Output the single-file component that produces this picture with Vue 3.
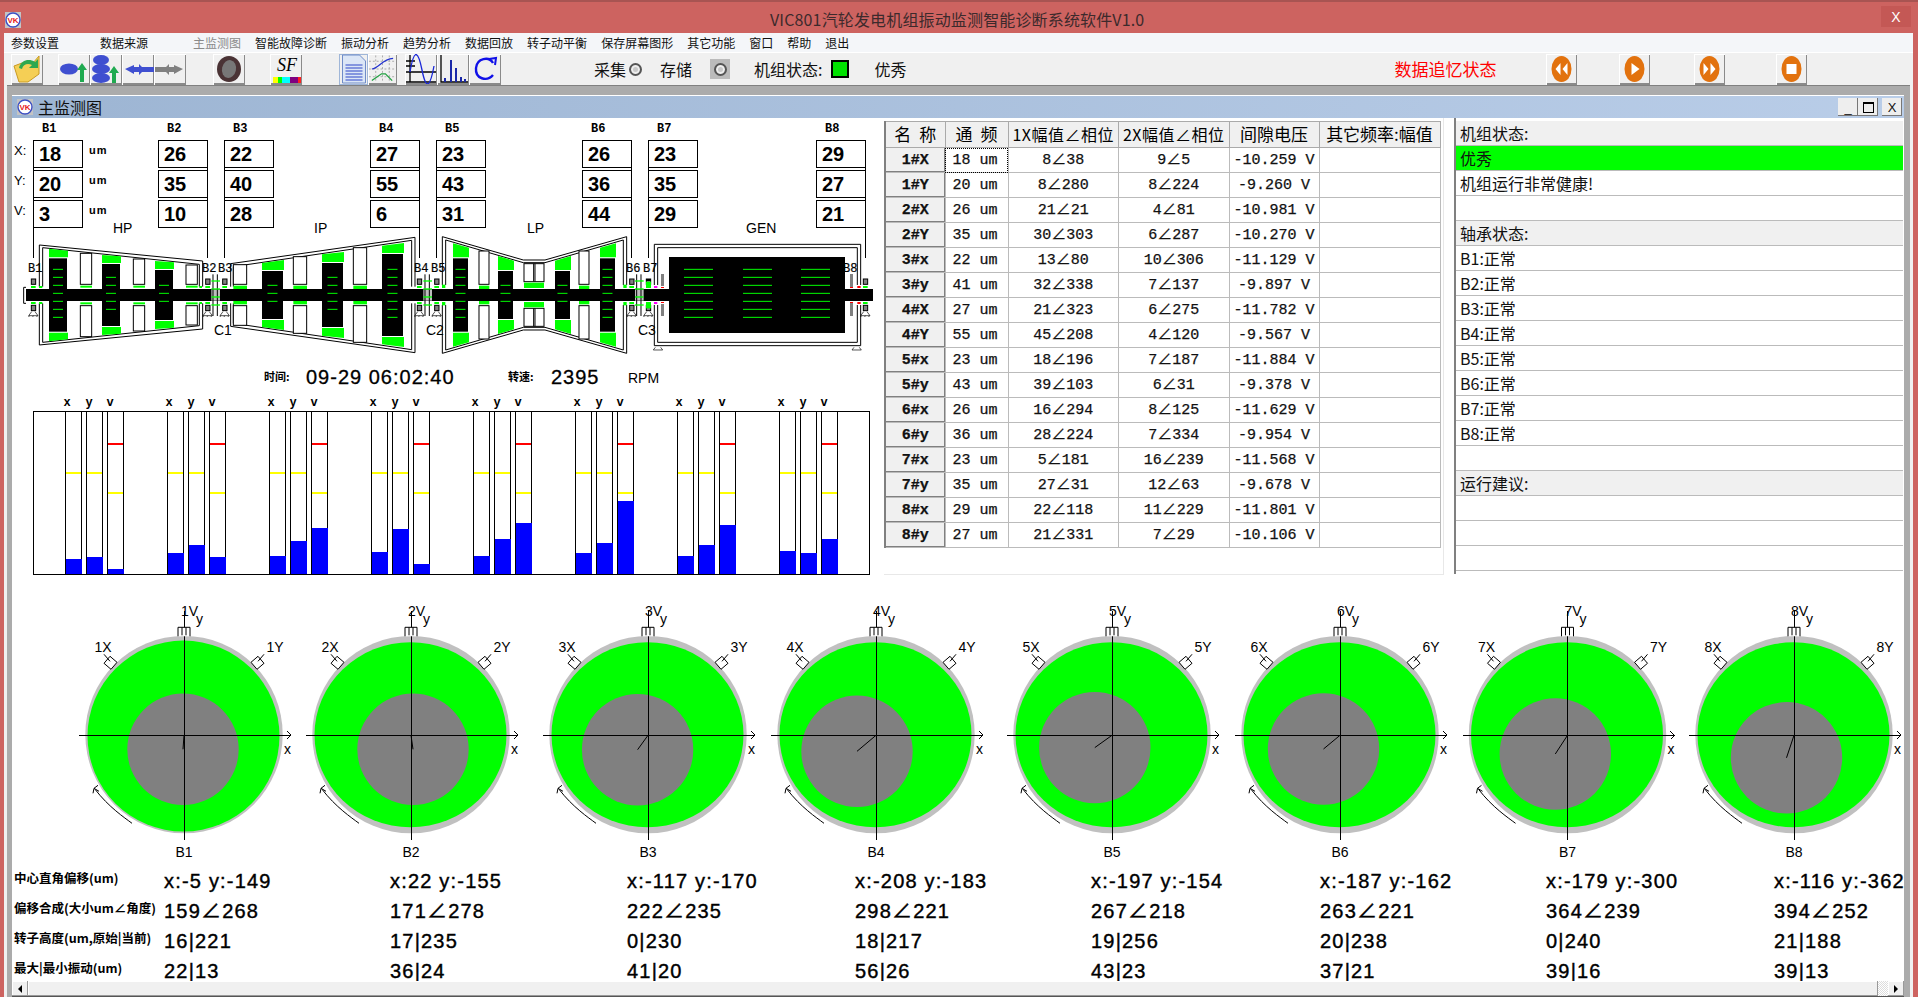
<template>
  <div class="window">
    <div class="titlebar">
      <svg class="logo" viewBox="0 0 16 16"><rect width="16" height="16" fill="#c4c4c4"/><circle cx="8" cy="8" r="7" fill="#fff" stroke="#3b4fc4" stroke-width="1.4"/><text x="8" y="11" text-anchor="middle" class="logo-text">VK</text></svg>
      <span class="title-text">VIC801汽轮发电机组振动监测智能诊断系统软件V1.0</span>
      <span class="close">X</span>
    </div>

    <div class="client">
      <div class="menubar">
        <span v-for="m in menus" :key="m.label" class="menu-item" :class="m.cls">{{ m.label }}</span>
      </div>

      <div class="toolbar">
        <button class="tool first">
          <svg viewBox="0 0 32 30"><path d="M3 12 L11 9 L22 9 L28 2 L28 20 L17 28 L8 28 Z" fill="#f5cf55" stroke="#c99a22"/><path d="M8 14 C10 6 18 4 24 8 L27 5 L27 14 L18 14 L21 11 C17 9 12 10 11 15 Z" fill="#2fa84f"/></svg>
        </button>
        <div class="tool-group g2">
          <button class="tool">
            <svg viewBox="0 0 32 30"><ellipse cx="11" cy="15" rx="9" ry="5.5" fill="#3f4fd0"/><path d="M24 9 L29 16 L26 16 L26 28 L22 28 L22 16 L19 16 Z" fill="#1faa50"/></svg>
          </button>
          <button class="tool">
            <svg viewBox="0 0 32 30"><ellipse cx="11" cy="6" rx="8" ry="5" fill="#3f4fd0"/><ellipse cx="11" cy="15" rx="9" ry="5" fill="#3f4fd0"/><ellipse cx="11" cy="24" rx="9" ry="5" fill="#3f4fd0"/><path d="M24 12 L29 19 L26 19 L26 29 L22 29 L22 19 L19 19 Z" fill="#1faa50"/></svg>
          </button>
          <button class="tool">
            <svg viewBox="0 0 32 30"><path d="M3 15 L12 11 L12 13 L17 13 L17 10 L20 13 L32 13 L32 18 L20 18 L17 21 L17 18 L12 18 L12 20 Z" fill="#3f4fd0"/></svg>
          </button>
          <button class="tool">
            <svg viewBox="0 0 32 30"><path d="M29 15 L20 11 L20 13 L15 13 L15 10 L12 13 L1 13 L1 18 L12 18 L15 21 L15 18 L20 18 L20 20 Z" fill="#808080"/></svg>
          </button>
        </div>
        <button class="tool g3">
          <svg viewBox="0 0 32 30"><ellipse cx="16" cy="15" rx="12" ry="13" fill="#4a3335"/><ellipse cx="16" cy="15" rx="7" ry="9" fill="#777" transform="rotate(12 16 15)"/></svg>
        </button>
        <button class="tool g4">
          <svg viewBox="0 0 32 30"><text x="17" y="17" text-anchor="middle" class="sf">SF</text><rect x="3" y="23" width="5" height="6" fill="#ffff00"/><rect x="8" y="23" width="4" height="6" fill="#00ff00"/><rect x="12" y="23" width="8" height="6" fill="#00ffff"/><rect x="20" y="23" width="8" height="6" fill="#800080"/><rect x="28" y="23" width="3" height="6" fill="#ff2020"/></svg>
        </button>
        <div class="tool-group g5">
          <button class="tool narrow active-tool">
            <svg viewBox="0 0 28 30"><path d="M3 1 H20 L26 7 V29 H3 Z" fill="#dbe6f6" stroke="#6f8cc8"/><path d="M6 11 H23 M6 14 H23 M6 17 H23 M6 20 H23 M6 23 H23 M6 26 H23" stroke="#2f47c8" stroke-width="1.2"/></svg>
          </button>
          <button class="tool narrow">
            <svg viewBox="0 0 30 30"><path d="M1 7 H29 M1 15 H29 M1 23 H29 M8 1 V29 M15 1 V29 M22 1 V29" stroke="#aaa" stroke-dasharray="2 2"/><path d="M4 15 C12 14 14 5 26 4" stroke="#2231d0" fill="none" stroke-width="1.3"/><path d="M4 27 L14 20 L18 20 L25 27" stroke="#20a040" fill="none" stroke-width="1.3"/></svg>
          </button>
        </div>
        <div class="tool-group g6">
          <button class="tool">
            <svg viewBox="0 0 32 30"><path d="M5 1 V28 M1 18 H31 M1 28 H31 M1 7 H10 M1 12 H10" stroke="#000" stroke-width="1.3"/><path d="M5 18 C9 -6 13 -4 17 16 C21 36 25 34 29 12" stroke="#1a28d8" fill="none" stroke-width="1.3"/></svg>
          </button>
          <button class="tool">
            <svg viewBox="0 0 32 30"><path d="M4 1 V28 H31" stroke="#000" stroke-width="1.3" fill="none"/><path d="M8 28 V24 M14 28 V6 M19 28 V14 M24 28 V23 M28 28 V25" stroke="#1a28a8" stroke-width="2"/></svg>
          </button>
          <button class="tool">
            <svg viewBox="0 0 32 30"><path d="M24 9 C20 2 8 4 7 14 C6 25 18 28 24 21" stroke="#1010e8" fill="none" stroke-width="2.4"/><path d="M20 5 L27 4 L26 11" stroke="#1010e8" fill="none" stroke-width="2"/></svg>
          </button>
        </div>

        <span class="tb-label cap">采集</span>
        <span class="ring"></span>
        <span class="tb-label store">存储</span>
        <span class="ring-box"><span class="ring"></span></span>
        <span class="tb-label unit">机组状态:</span>
        <span class="led"></span>
        <span class="tb-label good">优秀</span>
        <span class="tb-label replay">数据追忆状态</span>
        <button class="play prev">
          <svg viewBox="0 0 26 30"><ellipse cx="13" cy="15" rx="10" ry="13" fill="#e2720e"/><path d="M12 9 L7 15 L12 21 Z M19 9 L14 15 L19 21 Z" fill="#fff"/></svg>
        </button>
        <button class="play">
          <svg viewBox="0 0 26 30"><ellipse cx="13" cy="15" rx="10" ry="13" fill="#e2720e"/><path d="M10 9 L18 15 L10 21 Z" fill="#fff"/></svg>
        </button>
        <button class="play next">
          <svg viewBox="0 0 26 30"><ellipse cx="13" cy="15" rx="10" ry="13" fill="#e2720e"/><path d="M7 9 L12 15 L7 21 Z M14 9 L19 15 L14 21 Z" fill="#fff"/></svg>
        </button>
        <button class="play stop">
          <svg viewBox="0 0 26 30"><ellipse cx="13" cy="15" rx="10" ry="13" fill="#e2720e"/><rect x="8" y="10" width="10" height="10" fill="#fff"/></svg>
        </button>
      </div>

      <div class="mdi">
        <div class="child">
          <div class="child-title">
            <svg class="logo" viewBox="0 0 16 16"><rect width="16" height="16" fill="#c4c4c4"/><circle cx="8" cy="8" r="7" fill="#fff" stroke="#3b4fc4" stroke-width="1.4"/><text x="8" y="11" text-anchor="middle" class="logo-text">VK</text></svg>
            <span class="child-name">主监测图</span>
            <span class="win-btn min">_</span>
            <span class="win-btn max"></span>
            <span class="win-btn cls">X</span>
          </div>

          <div class="content">
            <div class="top-row">
              <svg class="plant" width="871" height="457" viewBox="12 118 871 457">
                <!-- value boxes -->
                <g v-for="b in bearings" :key="b.name">
                  <text :x="b.x + 9" y="132" class="b-head">{{ b.name }}</text>
                  <g v-for="(v, i) in b.vals" :key="i">
                    <rect :x="b.x + .5" :y="140.5 + i * 30" width="49" height="27" fill="#fff" stroke="#000" shape-rendering="crispEdges"/>
                    <text :x="b.x + 6" :y="161 + i * 30" class="box-val">{{ v }}</text>
                  </g>
                  <path :d="`M${b.side + .5} 167V170M${b.side + .5} 197V200M${b.side + .5} 228V258`" stroke="#000" shape-rendering="crispEdges"/>
                </g>
                <text x="14" y="155" class="axis-name">X:</text>
                <text x="14" y="185" class="axis-name">Y:</text>
                <text x="14" y="215" class="axis-name">V:</text>
                <text x="89" y="154" class="um">um</text>
                <text x="89" y="184" class="um">um</text>
                <text x="89" y="214" class="um">um</text>
                <text x="113" y="233" class="section">HP</text>
                <text x="314" y="233" class="section">IP</text>
                <text x="527" y="233" class="section">LP</text>
                <text x="746" y="233" class="section">GEN</text>
                <text x="214" y="335" class="section">C1</text>
                <text x="426" y="335" class="section">C2</text>
                <text x="638" y="335" class="section">C3</text>
                <text v-for="l in bearingLabels" :key="l.t" :x="l.x" y="272" class="bearing-name">{{ l.t }}</text>

                <!-- turbine, drawn in 3x units so a 1px line is stroke 3 -->
                <g transform="translate(0 115) scale(.33333)">
                  <path v-for="(c, i) in casings" :key="'c' + i" :d="c" fill="none" stroke="#000" stroke-width="3"/>
                  <g v-for="(f, i) in fins" :key="'f' + i">
                    <rect :x="f.x" :y="f.y" :width="f.w" :height="508 - f.y" fill="#fff" stroke="#000" stroke-width="3"/>
                    <rect :x="f.x" :y="572" :width="f.w" :height="508 - f.y" fill="#fff" stroke="#000" stroke-width="3"/>
                    <rect :x="f.x" :y="512" :width="f.w + 1" :height="f.g" fill="#00ff00"/>
                    <rect :x="f.x" :y="568 - f.g" :width="f.w + 1" :height="f.g" fill="#00ff00"/>
                  </g>
                  <rect x="1572" y="446" width="60" height="54" fill="#fff" stroke="#000" stroke-width="3"/>
                  <rect x="1572" y="580" width="60" height="54" fill="#fff" stroke="#000" stroke-width="3"/>
                  <path d="M1601 446V500M1605 446V500M1601 580V634M1605 580V634" stroke="#000" stroke-width="3"/>
                  <rect x="1572" y="503" width="60" height="16" fill="#00ff00"/>
                  <rect x="1572" y="561" width="60" height="16" fill="#00ff00"/>
                  <g v-for="(d, i) in discs" :key="'d' + i">
                    <polygon :points="`${d.x},${d.l} ${d.x + d.g},${d.r} ${d.x + d.g},${d.y - 3} ${d.x},${d.y - 3}`" fill="#00ff00"/>
                    <polygon :points="`${d.x},${1080 - d.l} ${d.x + d.g},${1080 - d.r} ${d.x + d.g},${1083 - d.y} ${d.x},${1083 - d.y}`" fill="#00ff00"/>
                    <rect :x="d.x" :y="d.y" :width="d.w" :height="1080 - 2 * d.y" fill="#000"/>
                  </g>
                  <rect x="2007" y="426" width="528" height="228" fill="#000"/>
                  <rect x="78" y="522" width="2541" height="36" fill="#000"/>
                  <path d="M78 517H71V565H78" fill="none" stroke="#000" stroke-width="3"/>
                  <path v-for="(m, i) in discMarks" :key="'m' + i" :d="m" stroke="#00ff00" stroke-width="3"/>
                  <g v-for="(c, i) in couplings" :key="'k' + i">
                    <rect :x="c" y="523" width="26" height="34" fill="#bdbdbd"/>
                    <path :d="`M${c + 5} 478V603M${c + 18} 478V603`" stroke="#000" stroke-width="3"/>
                    <rect v-for="y in [496, 520, 544, 568]" :key="y" :x="c" :y="y" width="26" height="4" fill="#00ff00"/>
                  </g>
                  <g v-for="(p, i) in pedestals" :key="'p' + i">
                    <rect :x="p - 6" y="492" width="13" height="16" fill="#808080" stroke="#000" stroke-width="3"/>
                    <rect :x="p - 6" y="571" width="13" height="16" fill="#808080" stroke="#000" stroke-width="3"/>
                    <rect :x="p - 7" y="513" width="14" height="6" fill="#00ff00"/>
                    <rect :x="p - 7" y="561" width="14" height="6" fill="#00ff00"/>
                    <path :d="`M${p - 5} 590L${p - 14} 602H${p + 14}L${p + 5} 590M${p - 12} 602L${p - 14} 606M${p} 602L${p - 2} 606M${p + 12} 602L${p + 10} 606`" fill="#fff" stroke="#000" stroke-width="2"/>
                  </g>
                  <rect v-for="g in greenTabs" :key="g[0] + '-' + g[1]" :x="g[0]" :y="g[1]" :width="g[2]" :height="g[3]" :fill="g[4] || '#00ff00'"/>
                  <path d="M1966 697L1960 705H1988L1982 697M2562 697L2556 705H2584L2578 697" fill="none" stroke="#000" stroke-width="2"/>
                </g>

                <text x="264" y="381" class="tiny-bold">时间:</text>
                <text x="306" y="384" class="big-time">09-29 06:02:40</text>
                <text x="508" y="381" class="tiny-bold">转速:</text>
                <text x="551" y="384" class="big-time">2395</text>
                <text x="628" y="383" class="rpm">RPM</text>

                <!-- vibration bars -->
                <rect x="33.5" y="411.5" width="836" height="163" fill="#fff" stroke="#000" shape-rendering="crispEdges"/>
                <g v-for="(g, i) in barGroups" :key="'bar' + i" :transform="`translate(${i * 102} 0)`" shape-rendering="crispEdges">
                  <text x="67" y="406" text-anchor="middle" class="bar-axis">x</text>
                  <text x="89" y="406" text-anchor="middle" class="bar-axis">y</text>
                  <text x="110" y="406" text-anchor="middle" class="bar-axis">v</text>
                  <g v-for="(h, j) in g" :key="j">
                    <rect :x="65.5 + j * 21" y="411.5" width="16" height="163" fill="#fff" stroke="#000"/>
                    <rect :x="66 + j * 21" :y="574 - h" width="16" :height="h" fill="#0000ff"/>
                  </g>
                  <rect x="66" y="472" width="15" height="2" fill="#ffff00"/>
                  <rect x="87" y="472" width="15" height="2" fill="#ffff00"/>
                  <rect x="108" y="443" width="15" height="2" fill="#ff0000"/>
                  <rect x="108" y="492" width="15" height="2" fill="#ffff00"/>
                </g>
              </svg>

              <div class="table-wrap">
                <table class="grid">
                  <colgroup>
                    <col class="c1"><col class="c2"><col class="c3"><col class="c3"><col class="c4"><col class="c5">
                  </colgroup>
                  <thead>
                    <tr>
                      <th class="spaced">名 称</th><th class="spaced">通 频</th><th class="amp">1X幅值∠相位</th><th class="amp">2X幅值∠相位</th><th>间隙电压</th><th>其它频率:幅值</th>
                    </tr>
                  </thead>
                  <tbody>
                    <tr v-for="(r, i) in rows" :key="r[0]">
                      <td class="name"><span>{{ r[0] }}</span></td>
                      <td class="freq" :class="{ focus: i === 0 }">{{ r[1] }} um</td>
                      <td>{{ r[2] }}</td>
                      <td>{{ r[3] }}</td>
                      <td>{{ r[4] }} V</td>
                      <td></td>
                    </tr>
                  </tbody>
                </table>
              </div>

              <div class="status">
                <div v-for="(s, i) in statusRows" :key="i" class="status-row" :class="s.cls">{{ s.text }}</div>
              </div>
            </div>

            <svg class="gauges" width="1891" height="287" viewBox="12 575 1891 287">
              <g v-for="g in gauges" :key="g.n" :transform="`translate(${g.cx} 735.3)`">
                <circle cy="-.7" r="98.7" fill="#c0c0c0"/>
                <ellipse cx="-.5" :cy="g.gy" rx="96" :ry="g.gry" fill="#00ff00"/>
                <circle :cx="g.dx" :cy="g.dy" r="55.7" fill="#808080"/>
                <path d="M-105 0H107M103-4L107 0L103 4M0-124V105" fill="none" stroke="#000" stroke-width="1" shape-rendering="crispEdges"/>
                <line x1="0" y1="0" :x2="g.dx" :y2="g.dy" stroke="#000"/>
                <path d="M-6-99V-108H6V-99M-2-108V-100M2-108V-100" fill="#fff" stroke="#000"/>
                <path d="M-80-81L-74-74M-80-72L-74-79L-67-73L-73-66Z" fill="#fff" stroke="#000"/>
                <path d="M80-81L74-74M80-72L74-79L67-73L73-66Z" fill="#fff" stroke="#000"/>
                <path d="M-90 53L-86 50M-91 58L-90 53L-85 56M-89 54C-75 72-60 82-52 88" fill="none" stroke="#000"/>
                <text x="5.5" y="-119" text-anchor="middle" class="g-label">{{ g.n }}V</text>
                <text x="12" y="-111" class="g-label">y</text>
                <text x="100" y="19" class="g-label">x</text>
                <text y="122" text-anchor="middle" class="g-label">B{{ g.n }}</text>
                <text x="-81" y="-83" text-anchor="middle" class="g-label">{{ g.n }}X</text>
                <text x="91" y="-83" text-anchor="middle" class="g-label">{{ g.n }}Y</text>
              </g>
            </svg>

            <div class="stats">
              <template v-for="row in stats" :key="row.label">
                <div class="stat-label">{{ row.label }}</div>
                <div v-for="(v, i) in row.vals" :key="i" class="stat-val">{{ v }}</div>
              </template>
            </div>
          </div>

          <div class="hscroll">
            <span class="arrow"><i class="tri left"></i></span>
            <span class="thumb"></span>
            <span class="track"></span>
            <span class="arrow"><i class="tri right"></i></span>
          </div>
        </div>
      </div>
    </div>
  </div>
</template>

<script setup>
const menus = [
  { label: '参数设置' },
  { label: '数据来源', cls: 'gap-a' },
  { label: '主监测图', cls: 'gap-b disabled' },
  { label: '智能故障诊断' },
  { label: '振动分析' },
  { label: '趋势分析' },
  { label: '数据回放' },
  { label: '转子动平衡' },
  { label: '保存屏幕图形' },
  { label: '其它功能' },
  { label: '窗口' },
  { label: '帮助' },
  { label: '退出' }
]

const bearings = [
  { name: 'B1', x: 33, side: 33, vals: [18, 20, 3] },
  { name: 'B2', x: 158, side: 207, vals: [26, 35, 10] },
  { name: 'B3', x: 224, side: 224, vals: [22, 40, 28] },
  { name: 'B4', x: 370, side: 419, vals: [27, 55, 6] },
  { name: 'B5', x: 436, side: 436, vals: [23, 43, 31] },
  { name: 'B6', x: 582, side: 631, vals: [26, 36, 44] },
  { name: 'B7', x: 648, side: 648, vals: [23, 35, 29] },
  { name: 'B8', x: 816, side: 865, vals: [29, 27, 21] }
]

const bearingLabels = [
  { t: 'B1', x: 28 }, { t: 'B2', x: 202 }, { t: 'B3', x: 218 }, { t: 'B4', x: 414 },
  { t: 'B5', x: 431 }, { t: 'B6', x: 626 }, { t: 'B7', x: 643 }, { t: 'B8', x: 843 }
]

// upper half of a casing, the lower half is the same thing mirrored round y=540
const mirror = pts => pts.map(([x, y]) => [x, 1080 - y])
const line = pts => 'M' + pts.map(p => p.join(' ')).join('L')
const both = pts => [line(pts), line(mirror(pts))]

const casings = [
  ...both([[118, 515], [118, 390], [608, 438], [608, 515]]),
  ...both([[128, 515], [128, 398], [598, 448], [598, 515]]),
  ...both([[692, 515], [692, 446], [1245, 367], [1245, 515]]),
  ...both([[700, 515], [700, 455], [1235, 376], [1235, 515]]),
  ...both([[1327, 510], [1327, 365], [1570, 435], [1635, 435], [1880, 365], [1880, 510]]),
  ...both([[1337, 510], [1337, 375], [1570, 443], [1635, 443], [1870, 375], [1870, 510]]),
  ...both([[1963, 510], [1963, 388], [2582, 388], [2582, 510]]),
  ...both([[1973, 510], [1973, 398], [2572, 398], [2572, 510]])
]

const fins = [
  { x: 241, y: 415, w: 34, g: 6 }, { x: 400, y: 432, w: 34, g: 6 }, { x: 558, y: 450, w: 34, g: 6 },
  { x: 700, y: 449, w: 40, g: 12 }, { x: 880, y: 425, w: 40, g: 12 }, { x: 1060, y: 398, w: 40, g: 12 },
  { x: 1437, y: 408, w: 30, g: 16 }, { x: 1737, y: 408, w: 30, g: 16 }
]

const discs = [
  { x: 147, w: 54, g: 57, y: 430, l: 401, r: 407 },
  { x: 306, w: 54, g: 57, y: 447, l: 420, r: 424 },
  { x: 465, w: 54, g: 57, y: 465, l: 438, r: 442 },
  { x: 786, w: 63, g: 66, y: 468, l: 444, r: 435 },
  { x: 966, w: 63, g: 66, y: 444, l: 418, r: 411 },
  { x: 1146, w: 63, g: 66, y: 417, l: 392, r: 384 },
  { x: 1359, w: 45, g: 48, y: 430, l: 385, r: 398 },
  { x: 1494, w: 45, g: 48, y: 468, l: 423, r: 437 },
  { x: 1665, w: 45, g: 48, y: 468, l: 437, r: 423 },
  { x: 1800, w: 45, g: 48, y: 430, l: 398, r: 385 }
]

const discMarks = []
for (const d of discs) {
  const mid = d.x + d.w / 2
  for (let k = -3; k <= 3; k++) {
    const y = 535 + k * 24
    if (y >= d.y + 30 && y <= 1080 - d.y - 40) discMarks.push(`M${mid - 15} ${y}H${mid + 15}`)
  }
}
for (const x of [2052, 2229, 2403]) {
  for (let k = -3; k <= 3; k++) discMarks.push(`M${x} ${535 + k * 24}h87`)
}

const couplings = [634, 1270, 1905]
const pedestals = [100, 623, 674, 1258, 1310, 1895, 1945, 2596]
const greenTabs = [
  [117, 513, 10, 6], [117, 561, 10, 6], [598, 513, 8, 6], [598, 561, 8, 6],
  [1326, 509, 10, 10], [1326, 561, 10, 10], [1870, 509, 10, 10], [1870, 561, 10, 10],
  [1938, 500, 15, 19], [1938, 561, 15, 19],
  [1938, 492, 15, 6, '#000000'],
  [1962, 513, 10, 6, '#ff00ff'], [1962, 561, 10, 6, '#ff00ff'],
  [1983, 477, 9, 36, '#808080'], [1983, 567, 9, 36, '#808080'],
  [1983, 516, 9, 3, '#ff0000'], [1983, 561, 9, 3, '#ff0000'],
  [2550, 477, 9, 39, '#808080'], [2550, 564, 9, 39, '#808080'],
  [2550, 516, 9, 3, '#ff0000'], [2550, 561, 9, 3, '#ff0000'],
  [2572, 513, 10, 6, '#ff0000'], [2572, 561, 10, 6, '#ff0000']
]

const barGroups = [
  [15, 17, 5], [21, 29, 17], [18, 33, 46], [22, 45, 10],
  [18, 35, 51], [21, 31, 73], [18, 29, 49], [23, 21, 35]
]

const rows = [
  ['1#X', 18, '8∠38', '9∠5', '-10.259'],
  ['1#Y', 20, '8∠280', '8∠224', '-9.260'],
  ['2#X', 26, '21∠21', '4∠81', '-10.981'],
  ['2#Y', 35, '30∠303', '6∠287', '-10.270'],
  ['3#x', 22, '13∠80', '10∠306', '-11.129'],
  ['3#y', 41, '32∠338', '7∠137', '-9.897'],
  ['4#X', 27, '21∠323', '6∠275', '-11.782'],
  ['4#Y', 55, '45∠208', '4∠120', '-9.567'],
  ['5#x', 23, '18∠196', '7∠187', '-11.884'],
  ['5#y', 43, '39∠103', '6∠31', '-9.378'],
  ['6#x', 26, '16∠294', '8∠125', '-11.629'],
  ['6#y', 36, '28∠224', '7∠334', '-9.954'],
  ['7#x', 23, '5∠181', '16∠239', '-11.568'],
  ['7#y', 35, '27∠31', '12∠63', '-9.678'],
  ['8#x', 29, '22∠118', '11∠229', '-11.801'],
  ['8#y', 27, '21∠331', '7∠29', '-10.106']
]

const statusRows = [
  { text: '机组状态:', cls: 'head' },
  { text: '优秀', cls: 'ok' },
  { text: '机组运行非常健康!' },
  { text: '' },
  { text: '轴承状态:', cls: 'head' },
  ...[1, 2, 3, 4, 5, 6, 7, 8].map(n => ({ text: `B${n}:正常` })),
  { text: '' },
  { text: '运行建议:', cls: 'head' },
  { text: '' },
  { text: '' },
  { text: '' }
]

const centers = [184, 411, 648, 876, 1112, 1340, 1567.5, 1794]
const offsets = [[-5, -149], [22, -155], [-117, -170], [-208, -183], [-197, -154], [-187, -162], [-179, -300], [-116, -362]]
// rotor position on the picture, measured in px from the axis cross
const rotors = [[-1, 14], [2, 14], [-10.4, 14.4], [-19, 16], [-17.2, 12.3], [-16.5, 13.7], [-12.2, 18.7], [-7.5, 22.5]]
const gauges = centers.map((cx, i) => ({
  n: i + 1,
  cx,
  dx: rotors[i][0],
  dy: rotors[i][1],
  gy: i === 0 ? .8 : -.5,
  gry: i === 0 ? 95.5 : 92.5
}))

const stats = [
  { label: '中心直角偏移(um)', vals: offsets.map(o => `x:${o[0]} y:${o[1]}`) },
  { label: '偏移合成(大小um∠角度)', vals: ['159∠268', '171∠278', '222∠235', '298∠221', '267∠218', '263∠221', '364∠239', '394∠252'] },
  { label: '转子高度(um,原始|当前)', vals: ['16|221', '17|235', '0|230', '18|217', '19|256', '20|238', '0|240', '21|188'] },
  { label: '最大|最小振动(um)', vals: ['22|13', '36|24', '41|20', '56|26', '43|23', '37|21', '39|16', '39|13'] }
]
</script>

<style>
html, body {
  margin: 0;
  overflow: hidden;
  background: #cd6360;
}
</style>

<style scoped>
.window {
  background: #cd6360;
  display: flex;
  flex-direction: column;
  font-family: "Noto Sans CJK SC", "Liberation Sans", sans-serif;
  height: 997px;
  overflow: hidden;
  width: 1918px;
}

.titlebar {
  align-items: center;
  border-top: 2px solid #a85452;
  box-sizing: border-box;
  display: flex;
  flex: none;
  height: 33px;
  padding: 4px 7px 0 5px;
  position: relative;
}

.logo {
  flex: none;
  height: 16px;
  width: 16px;
}

.logo-text {
  fill: #e82020;
  font: bold 8px "Liberation Sans", sans-serif;
}

.title-text {
  color: #3c2a2c;
  font-size: 16px;
  left: 770px;
  letter-spacing: .15px;
  line-height: 20px;
  position: absolute;
  top: 7px;
  white-space: nowrap;
}

.close {
  align-items: center;
  background: #c45855;
  color: #fff;
  display: flex;
  font: 14px "Liberation Sans", sans-serif;
  height: 21px;
  justify-content: center;
  margin-left: auto;
  margin-top: -6px;
  width: 30px;
}

.client {
  background: #f0f0f0;
  display: flex;
  flex: 1;
  flex-direction: column;
  margin: 0 5px 0 4px;
  min-height: 0;
}

.menubar {
  align-items: center;
  background: #f4f6f9;
  border-bottom: 1px solid #fff;
  box-sizing: border-box;
  display: flex;
  flex: none;
  gap: 14px;
  height: 20px;
  padding-left: 7px;
}

.menu-item {
  color: #111;
  font-size: 12px;
  line-height: 16px;
  white-space: nowrap;
}

.menu-item.gap-a {
  margin-left: 27px;
}

.menu-item.gap-b {
  margin-left: 31px;
}

.menu-item.disabled {
  color: #8a8a8a;
}

.toolbar {
  align-items: center;
  background: #f0f0f0;
  display: flex;
  flex: none;
  height: 32px;
  padding-left: 7px;
}

.tool,
.play {
  background: #f0f0f0;
  border: 0;
  box-shadow: inset 1px 1px 0 #fff, inset -1px -2px 0 #8a8a8a;
  box-sizing: border-box;
  display: block;
  flex: none;
  height: 31px;
  margin: 0;
  padding: 0;
  width: 32px;
}

.tool svg,
.play svg {
  display: block;
  height: 30px;
  width: 100%;
}

.tool.narrow {
  width: 29px;
}

.active-tool {
  box-shadow: inset 0 0 0 1px #9fb6d8;
}

.tool-group {
  display: flex;
  flex: none;
}

.g2 { margin-left: 15px; }
.g3 { margin-left: 27px; }
.g4 { margin-left: 25px; }
.g5 { margin-left: 37px; }
.g6 { margin-left: 8px; }

.sf {
  font: italic 18px "Liberation Serif", serif;
}

.tb-label {
  color: #111;
  flex: none;
  font-size: 16px;
  line-height: 20px;
  white-space: nowrap;
}

.cap { margin-left: 93px; }
.store { margin-left: 18px; }
.unit { margin-left: 24px; }
.good { margin-left: 25px; }

.replay {
  color: #f00;
  font-size: 17px;
  margin-left: 488px;
}

.ring {
  background: #c8c8c8;
  border: 2px solid #555;
  border-radius: 50%;
  box-shadow: inset 0 0 0 2px #eee;
  box-sizing: border-box;
  flex: none;
  height: 13px;
  margin-left: 3px;
  width: 13px;
}

.ring-box {
  align-items: center;
  background: #bbb;
  display: flex;
  flex: none;
  height: 20px;
  justify-content: center;
  margin-left: 18px;
  width: 20px;
}

.ring-box .ring {
  margin: 0;
}

.led {
  background: #00e000;
  border: 2px solid #000;
  box-sizing: border-box;
  flex: none;
  height: 18px;
  margin-left: 9px;
  width: 18px;
}

.play {
  margin-left: 42px;
  width: 31px;
}

.play.prev {
  margin-left: 49px;
}

.play.next {
  margin-left: 44px;
}

.play.stop {
  margin-left: 51px;
}

.mdi {
  background: #ababab;
  border-top: 1px solid #808080;
  box-sizing: border-box;
  display: flex;
  flex: 1;
  margin: 0 3px;
  min-height: 0;
  padding: 9px 6px 0 5px;
}

.child {
  background: #fff;
  border-top: 1px solid #fff;
  display: flex;
  flex: 1;
  flex-direction: column;
  min-width: 0;
}

.child-title {
  align-items: center;
  background: linear-gradient(90deg, #9db5d3, #b9cde8);
  box-sizing: border-box;
  display: flex;
  flex: none;
  height: 22px;
  padding: 0 2px 0 5px;
}

.child-name {
  color: #111;
  font-size: 16px;
  line-height: 20px;
  margin-left: 5px;
}

.win-btn {
  align-items: center;
  background: #eee;
  box-shadow: inset -1px -1px 0 #777;
  box-sizing: border-box;
  color: #111;
  display: flex;
  font: 13px "Liberation Sans", sans-serif;
  height: 18px;
  justify-content: center;
  width: 20px;
}

.min {
  margin-left: auto;
}

.max::before {
  border: 1px solid #000;
  border-top-width: 2px;
  content: "";
  height: 8px;
  width: 9px;
}

.cls {
  margin-left: 4px;
}

.content {
  flex: 1;
  min-height: 0;
  overflow: hidden;
}

.top-row {
  display: flex;
  height: 457px;
}

.plant,
.gauges {
  display: block;
  flex: none;
}

.b-head,
.bearing-name {
  font: bold 12px "Liberation Mono", monospace;
}

.bearing-name {
  font-size: 12px;
  font-weight: 400;
  stroke: #000;
  stroke-width: .2;
}

.box-val {
  font: bold 20px "Liberation Sans", sans-serif;
}

.axis-name {
  font: 13px "Liberation Sans", sans-serif;
}

.um {
  font: bold 11px "Liberation Sans", sans-serif;
  letter-spacing: 1px;
}

.section {
  font: 14px "Liberation Sans", sans-serif;
}

.tiny-bold {
  font: bold 11px "Noto Sans CJK SC", sans-serif;
}

.big-time {
  font: 20px "Liberation Sans", sans-serif;
  letter-spacing: 1px;
  stroke: #000;
  stroke-width: .3;
}

.rpm {
  font: 14px "Liberation Sans", sans-serif;
}

.bar-axis {
  font: bold 12px "Liberation Mono", monospace;
}

.table-wrap {
  border-bottom: 1px solid #e8e8e8;
  border-right: 1px solid #e8e8e8;
  box-sizing: border-box;
  flex: none;
  height: 457px;
  margin-left: 1px;
  padding-top: 3px;
  width: 560px;
}

.grid {
  border-collapse: collapse;
  border-left: 2px solid #808080;
  font: 15px "Liberation Mono", "Noto Sans CJK SC", monospace;
  table-layout: fixed;
  width: 556px;
}

.c1 { width: 60px; }
.c2 { width: 63px; }
.c3 { width: 110.5px; }
.c4 { width: 90px; }
.c5 { width: 121px; }

.grid th {
  background: #f0f0f0;
  border: 1px solid #aaa;
  box-sizing: border-box;
  font: 400 17px "Noto Sans CJK SC", sans-serif;
  height: 26px;
  line-height: 20px;
  padding: 0 0 2px;
  white-space: nowrap;
}

.grid th.amp {
  font-size: 16px;
  letter-spacing: .5px;
}

.grid th.spaced {
  word-spacing: 4px;
}

.grid td {
  border: 1px solid #bbb;
  box-sizing: border-box;
  color: #111;
  height: 25px;
  line-height: 20px;
  padding: 2px 0 0;
  text-align: center;
  -webkit-text-stroke: .25px #111;
  white-space: nowrap;
}

.grid td.name {
  background: #f0f0f0;
  font-weight: 700;
  box-shadow: inset -1px -1px 0 #808080;
}

.grid td.freq {
  padding-left: 7px;
  text-align: left;
}

.grid td.focus {
  outline: 1px dotted #000;
  outline-offset: -1px;
}

.status {
  border-left: 2px solid #808080;
  box-sizing: border-box;
  flex: none;
  height: 456px;
  margin-left: 10px;
  padding-top: 3px;
  width: 449px;
}

.status-row {
  border-bottom: 1px solid #bbb;
  box-sizing: border-box;
  color: #111;
  font-size: 16px;
  height: 25px;
  line-height: 24px;
  padding-left: 4px;
  white-space: nowrap;
}

.status-row.head {
  background: #f0f0f0;
  border-top: 0;
}

.status-row.ok {
  background: #00ff00;
}

.g-label {
  font: 14px "Liberation Sans", sans-serif;
}

.stats {
  display: grid;
  grid-auto-rows: 30px;
  grid-template-columns: 152px 226px 237px 228px 236px 229px 226px 228px 129px;
  padding-top: 4px;
}

.stat-label {
  align-self: center;
  font-size: 12.5px;
  font-weight: 700;
  line-height: 16px;
  margin-top: -6px;
  padding-left: 2px;
  white-space: nowrap;
}

.stat-val {
  align-self: center;
  font: 20px "Liberation Sans", "Noto Sans CJK SC", sans-serif;
  -webkit-text-stroke: .4px #000;
  letter-spacing: 1.2px;
  line-height: 24px;
  white-space: nowrap;
}

.hscroll {
  background: #f0f0f0;
  border-bottom: 1px solid #555;
  box-sizing: border-box;
  display: flex;
  flex: none;
  height: 16px;
  position: relative;
  z-index: 1;
}

.arrow {
  align-items: center;
  background: #f0f0f0;
  box-shadow: inset -1px -1px 0 #999, inset 1px 1px 0 #fff;
  display: flex;
  flex: none;
  justify-content: center;
  width: 16px;
}

.tri {
  border: 4px solid transparent;
  height: 0;
  width: 0;
}

.tri.left {
  border-left-width: 0;
  border-right-color: #000;
}

.tri.right {
  border-left-color: #000;
  border-right-width: 0;
}

.thumb {
  background: #f0f0f0;
  box-shadow: inset -1px -1px 0 #999, inset 1px 1px 0 #fff;
  flex: 1;
}

.track {
  background: repeating-conic-gradient(#ddd 0 25%, #fff 0 50%) 0 0 / 2px 2px;
  flex: none;
  width: 10px;
}
</style>
